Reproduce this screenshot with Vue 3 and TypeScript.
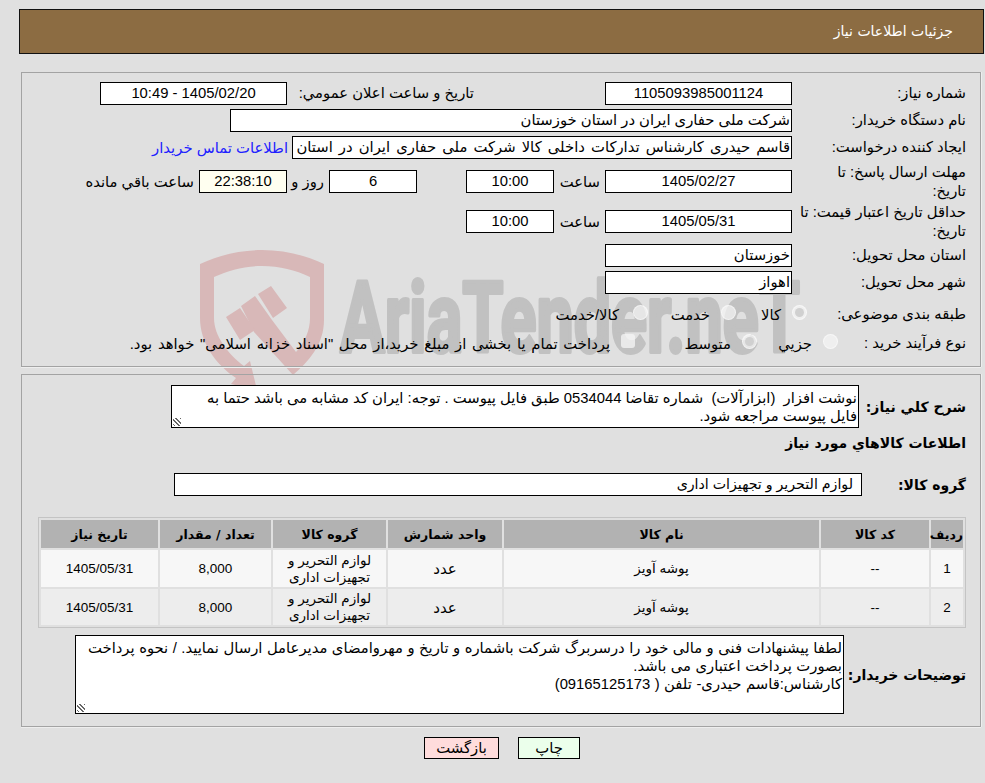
<script setup lang="ts">
interface ItemRow {
  id: number
  code: string
  name: string
  unit: string
  group: string
  qty: string
  date: string
}

const items: ItemRow[] = [
  { id: 1, code: '--', name: 'پوشه آویز', unit: 'عدد', group: 'لوازم التحریر و تجهیزات اداری', qty: '8,000', date: '1405/05/31' },
  { id: 2, code: '--', name: 'پوشه آویز', unit: 'عدد', group: 'لوازم التحریر و تجهیزات اداری', qty: '8,000', date: '1405/05/31' },
]
</script>

<template>
  <div class="page" dir="rtl">
    <!-- watermark sits behind both panels, viewBox uses page coordinates -->
    <svg class="watermark" width="620" height="145" viewBox="195 245 620 145">
      <path class="shield" d="M200 264 C220 255 240 250 262 250 C284 250 305 255 324 264 L324 320 C324 345 308 362 293 375 L254 332 L241 306 L255 296 L272 320 L296 352 C305 342 310 330 310 318 L310 277 C295 270 280 266 262 266 C244 266 229 270 214 277 L214 318 C214 336 228 354 244 366 L250 361 L257 390 L231 384 L236 378 C215 364 200 342 200 318 Z" />
      <path class="shield" d="M226 317 L240 308 L255 330 L240 340 Z M258 294 L271 286 L287 308 L273 318 Z" />
      <text class="wm-text" x="340" y="352" textLength="460" lengthAdjust="spacingAndGlyphs">AriaTender.neT</text>
    </svg>

    <header class="title-bar">جزئیات اطلاعات نیاز</header>

    <section class="panel top-panel">
      <div class="row row-first">
        <div class="label">شماره نیاز:</div>
        <div class="field wide center">1105093985001124</div>
        <div class="label announce">تاریخ و ساعت اعلان عمومي:</div>
        <div class="field wide center">1405/02/20 - 10:49</div>
      </div>
      <div class="row">
        <div class="label">نام دستگاه خریدار:</div>
        <div class="field buyer">شرکت ملی حفاری ایران در استان خوزستان</div>
      </div>
      <div class="row">
        <div class="label">ایجاد کننده درخواست:</div>
        <div class="field creator">قاسم حیدری کارشناس تدارکات داخلی کالا شرکت ملی حفاری ایران در استان خوزستان</div>
        <a class="contact">اطلاعات تماس خریدار</a>
      </div>
      <div class="row row-deadline">
        <div class="label">مهلت ارسال پاسخ: تا<br>تاریخ:</div>
        <div class="field wide center">1405/02/27</div>
        <span class="hour">ساعت</span>
        <div class="field small center">10:00</div>
        <div class="field small center days">6</div>
        <span class="roz">روز و</span>
        <div class="field small center timer">22:38:10</div>
        <span class="remain">ساعت باقي مانده</span>
      </div>
      <div class="row row-validity">
        <div class="label">حداقل تاریخ اعتبار قیمت: تا تاریخ:</div>
        <div class="field wide center">1405/05/31</div>
        <span class="hour">ساعت</span>
        <div class="field small center">10:00</div>
      </div>
      <div class="row">
        <div class="label">استان محل تحویل:</div>
        <div class="field wide">خوزستان</div>
      </div>
      <div class="row">
        <div class="label">شهر محل تحویل:</div>
        <div class="field wide">اهواز</div>
      </div>
      <div class="row row-radio">
        <div class="label">طبقه بندی موضوعی:</div>
        <div class="options options-subject">
          <span class="radio checked"></span><span class="opt opt-kala">کالا</span>
          <span class="radio"></span><span class="opt opt-service">خدمت</span>
          <span class="radio radio-last"></span><span class="opt">کالا/خدمت</span>
        </div>
      </div>
      <div class="row row-process">
        <div class="label">نوع فرآیند خرید :</div>
        <div class="options options-process">
          <span class="radio"></span><span class="opt opt-small">جزيي</span>
          <span class="radio checked"></span><span class="opt opt-mid">متوسط</span>
          <span class="check"></span><span class="opt opt-treasury">پرداخت تمام یا بخشی از مبلغ خرید،از محل "اسناد خزانه اسلامی" خواهد بود.</span>
        </div>
      </div>
    </section>

    <section class="panel bottom-panel">
      <div class="row desc-row">
        <div class="label-bold desc-label">شرح کلي نیاز:</div>
        <div class="textbox desc-box">نوشت افزار&nbsp; (ابزارآلات)&nbsp; شماره تقاضا 0534044 طبق فایل پیوست . توجه: ایران کد مشابه می باشد حتما به<br>فایل پیوست مراجعه شود.<span class="grip"></span></div>
      </div>
      <div class="label-bold goods-title">اطلاعات کالاهاي مورد نیاز</div>
      <div class="row group-row">
        <div class="label-bold group-label">گروه کالا:</div>
        <div class="field group-field">لوازم التحریر و تجهیزات اداری</div>
      </div>

      <table class="goods">
        <thead>
          <tr>
            <th class="c-id">ردیف</th>
            <th class="c-code">کد کالا</th>
            <th class="c-name">نام کالا</th>
            <th class="c-unit">واحد شمارش</th>
            <th class="c-group">گروه کالا</th>
            <th class="c-qty">تعداد / مقدار</th>
            <th class="c-date">تاریخ نیاز</th>
          </tr>
        </thead>
        <tbody>
          <tr v-for="item in items" :key="item.id">
            <td>{{ item.id }}</td>
            <td>{{ item.code }}</td>
            <td class="fa">{{ item.name }}</td>
            <td class="unit">{{ item.unit }}</td>
            <td class="fa">{{ item.group }}</td>
            <td>{{ item.qty }}</td>
            <td>{{ item.date }}</td>
          </tr>
        </tbody>
      </table>

      <div class="row notes-row">
        <div class="label-bold notes-label">توضیحات خریدار:</div>
        <div class="textbox notes-box">لطفا پیشنهادات فنی و مالی خود را درسربرگ شرکت باشماره و تاریخ و مهروامضای مدیرعامل ارسال نمایید. / نحوه پرداخت بصورت پرداخت اعتباری می باشد.<br>کارشناس:قاسم حیدری- تلفن ( 09165125173)<span class="grip"></span></div>
      </div>
    </section>

    <div class="buttons">
      <button class="btn print">چاپ</button>
      <button class="btn back">بازگشت</button>
    </div>
  </div>
</template>

<style>
html, body {
  margin: 0;
  background: #e0e0e0;
}
</style>

<style scoped>
.page {
  position: relative;
  width: 985px;
  height: 783px;
  box-sizing: border-box;
  padding: 9px 1px 0 4px;
  overflow: hidden;
  background: #e0e0e0;
  font-family: "Liberation Sans", "DejaVu Sans", sans-serif;
  font-size: 14.8px;
  color: #000;
}

.watermark {
  position: absolute;
  left: 195px;
  top: 245px;
  direction: ltr;
}

.shield {
  fill: #d8b8b8;
}

.wm-text {
  fill: #c1c1c1;
  stroke: #c1c1c1;
  stroke-width: 4px;
  stroke-linejoin: round;
  font-family: Roboto, "Liberation Sans", sans-serif;
  font-size: 98px;
  font-weight: 700;
}

.title-bar {
  position: relative;
  box-sizing: border-box;
  height: 45px;
  margin-left: 15px;
  padding: 13px 30px 0 0;
  border: 1px solid #111;
  background: #8c6c42;
  color: #fff;
  font-family: "DejaVu Sans", sans-serif;
  font-size: 14px;
}

.panel {
  position: relative;
  box-sizing: border-box;
  margin-left: 17px;
  margin-right: 3px;
  border: 1px solid #a3a3a3;
  box-shadow: 0 1px 0 #eee, 1px 0 0 #eee;
}

.top-panel {
  height: 295px;
  margin-top: 18px;
  padding-top: 9px;
}

.bottom-panel {
  height: 353px;
  margin-top: 7px;
  padding-top: 10px;
}

.row {
  display: flex;
  align-items: center;
  margin-top: 4px;
  min-height: 23px;
}

.row-first {
  margin-top: 0;
}

.label {
  width: 188px;
  padding: 0 14px 0 5px;
  box-sizing: border-box;
  flex: none;
  line-height: 18.5px;
}

.field {
  box-sizing: border-box;
  height: 23px;
  line-height: 21px;
  padding: 0 1px;
  border: 1px solid #000;
  background: #fff;
  white-space: nowrap;
  overflow: hidden;
  flex: none;
}

.center {
  text-align: center;
}

.wide {
  width: 187px;
}

.small {
  width: 88px;
}

.announce {
  width: 187px;
  margin-right: 131px;
  padding: 0 0 0 6px;
}

.buyer {
  width: 562px;
}

.creator {
  width: 500px;
  word-spacing: 2px;
}

.contact {
  margin-right: 4px;
  color: #2020ff;
  white-space: nowrap;
}

.row-deadline {
  min-height: 37px;
}

.row-validity {
  min-height: 37px;
  margin-top: 3px;
}

.hour {
  margin: 0 5px 0 13px;
  width: 33px;
  text-align: center;
}

.days {
  margin-right: 49px;
}

.roz {
  margin: 0 5px 0 5px;
  width: 32px;
  text-align: center;
  white-space: nowrap;
}

.timer {
  background: #fffff0;
}

.remain {
  margin-right: 5px;
  white-space: nowrap;
}

.row-radio {
  margin-top: 9px;
  min-height: 22px;
}

.row-process {
  margin-top: 7px;
  min-height: 22px;
}

.options {
  display: flex;
  align-items: center;
}

.options-subject {
  margin-right: -15px;
}

.options-process {
  margin-right: -46px;
}

.radio {
  flex: none;
  box-sizing: border-box;
  width: 15px;
  height: 15px;
  margin-left: 11px;
  border: 1px solid rgba(255, 255, 255, 0.5);
  border-radius: 50%;
  background: rgba(245, 245, 245, 0.7);
  position: relative;
  transform: translateY(-2px);
}

.radio-last {
  margin-left: 14px;
}

.radio.checked::after {
  content: "";
  position: absolute;
  left: 2px;
  top: 2px;
  width: 9px;
  height: 9px;
  border-radius: 50%;
  background: #d0d0d0;
}

.check {
  flex: none;
  width: 14px;
  height: 14px;
  margin-left: 11px;
  border-radius: 3px;
  background: rgba(245, 245, 245, 0.75);
  transform: translateY(-2px);
}

.opt {
  white-space: nowrap;
}

.opt-kala {
  width: 45px;
}

.opt-service {
  width: 62px;
}

.opt-small {
  width: 55px;
}

.opt-mid {
  width: 96px;
}

.opt-treasury {
  word-spacing: 1.6px;
}

.label-bold {
  font-family: "DejaVu Sans", sans-serif;
  font-size: 14px;
  font-weight: 700;
  flex: none;
}

.textbox {
  position: relative;
  box-sizing: border-box;
  flex: none;
  border: 1px solid #000;
  background: #fff;
  padding: 3px 1px 0;
  line-height: 18px;
}

.grip {
  position: absolute;
  left: 1px;
  bottom: 1px;
  width: 8px;
  height: 8px;
  background: repeating-linear-gradient(45deg, transparent 0 1px, #666 1px 2px, transparent 2px 3px);
}

.desc-row {
  margin-top: 0;
}

.desc-label {
  width: 121px;
  padding-right: 14px;
  box-sizing: border-box;
}

.desc-box {
  width: 688px;
  height: 43px;
}

.goods-title {
  margin-top: 3px;
  padding-right: 14px;
  line-height: 24px;
}

.group-row {
  margin-top: 18px;
}

.group-label {
  width: 118px;
  padding-right: 14px;
  box-sizing: border-box;
}

.group-field {
  width: 688px;
  padding-right: 8px;
  font-size: 14.2px;
}

.goods {
  width: 928px;
  margin: 21px 14px 0 0;
  border: 1px solid #c4c4c4;
  border-collapse: separate;
  border-spacing: 2px;
  table-layout: fixed;
  text-align: center;
}

.goods th {
  height: 28px;
  padding: 0;
  background: #b2b2b2;
  font-family: "DejaVu Sans", sans-serif;
  font-size: 12.5px;
  font-weight: 700;
}

.goods td {
  height: 37px;
  padding: 0;
  line-height: 17px;
  background: #f7f7f7;
  font-size: 13.5px;
}

.goods tbody tr:nth-child(2) td {
  height: 36px;
  background: #ededed;
}

.goods td.fa {
  font-size: 13.5px;
}

.goods td.unit {
  font-size: 15px;
}

.c-id { width: 32px; }
.c-code { width: 108px; }
.c-name { width: 315px; }
.c-unit { width: 114px; }
.c-group { width: 113px; }
.c-qty { width: 111px; }
.c-date { width: 117px; }

.notes-row {
  margin-top: 7px;
}

.notes-label {
  width: 136px;
  padding-right: 14px;
  box-sizing: border-box;
}

.notes-box {
  width: 769px;
  height: 79px;
  word-spacing: 0.4px;
}

.buttons {
  display: flex;
  justify-content: center;
  gap: 19px;
  margin-top: 10px;
  padding-left: 16px;
}

.btn {
  box-sizing: border-box;
  height: 22px;
  padding: 0;
  border: 1px solid #000;
  font-family: inherit;
  font-size: 14.8px;
  line-height: 18px;
  color: #000;
}

.print {
  width: 62px;
  background: #ebffeb;
}

.back {
  width: 75px;
  background: #ffdcdc;
}
</style>
